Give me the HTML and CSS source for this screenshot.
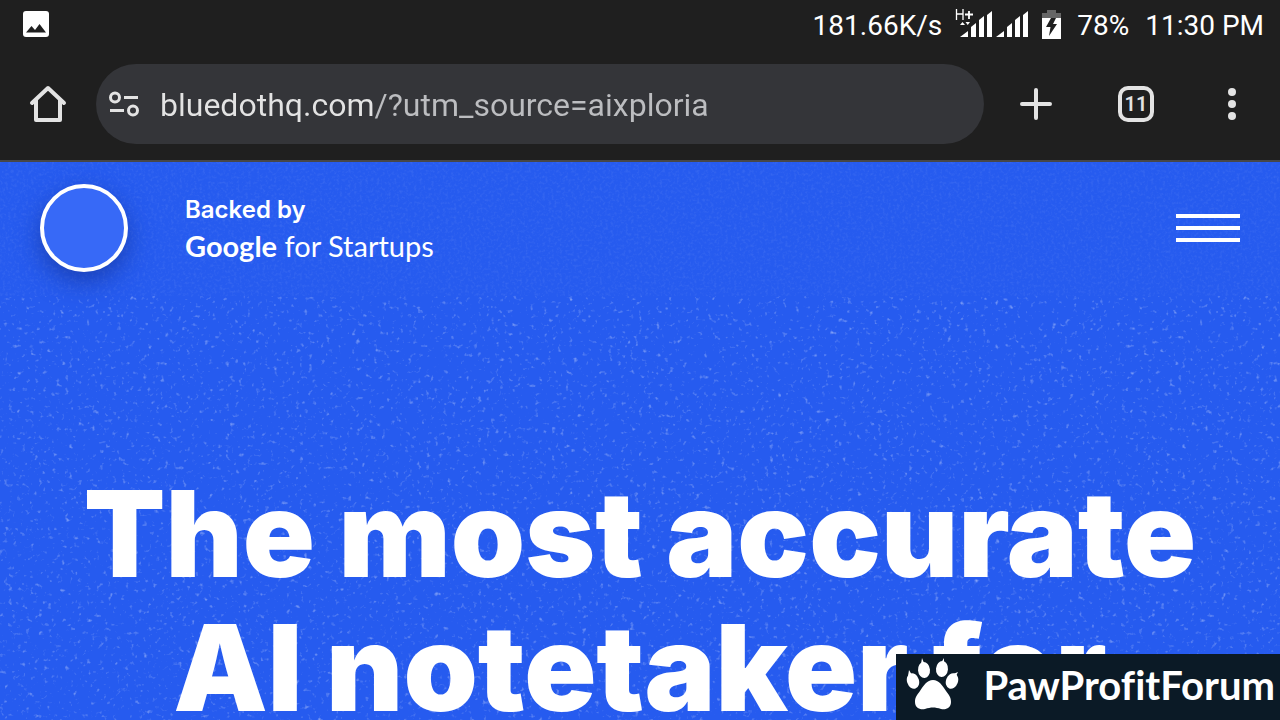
FILE: index.html
```html
<!DOCTYPE html>
<html lang="en">
<head>
  <meta charset="UTF-8">
  <meta name="viewport" content="width=device-width, initial-scale=1.0">
  <title>Bluedot</title>
  <link rel="stylesheet" href="styles.css">
</head>
<body>
  <header class="browser">
    <div class="status-bar">
      <svg class="picture-icon" width="26" height="26" viewBox="0 0 26 26">
        <rect width="26" height="26" rx="3" fill="#fff"/>
        <path d="M3 21.500 8.500 15l3.500 4 4.500-6L23 21.500z" fill="#1f1f1f"/>
      </svg>
      <div class="status-info">
        <span>181.66K/s</span>
        <svg class="signal" width="74" height="30" viewBox="0 0 74 30" fill="#fff">
          <g fill="none" stroke="#fff" stroke-width="1.300">
            <path d="M1.500 0v11M8 0v11M1.500 5h6.500"/>
            <path d="M10 5.500h8M14 2v8" stroke-width="1.800"/>
          </g>
          <path d="m5 16 2.500-3 2.500 3zM10.500 13h4.500l-2.250 3z"/>
          <path d="M5 28l8-6v6zM16 18l5-4v14h-5zM24 11l5-4v21h-5zM32 6l5-4v26h-5z"/>
          <path d="M41 28l8-6v6zM52 18l5-4v14h-5zM60 11l5-4v21h-5zM68 6l5-4v26h-5z"/>
        </svg>
        <svg class="battery" width="19" height="29" viewBox="0 0 19 29">
          <path d="M5 0h9v3h5v6H0V3h5z" fill="#666"/>
          <path d="M0 8h19v21H0z" fill="#fff"/>
          <path d="M9 8h5l-3 6h4L7 26l1.500-9H4z" fill="#1f1f1f"/>
        </svg>
        <span>78%</span>
        <span>11:30 PM</span>
      </div>
    </div>
    <div class="toolbar">
      <button class="tool" type="button" aria-label="Home">
        <svg width="40" height="40" viewBox="0 0 40 40" fill="none" stroke="#e3e3e3" stroke-width="4" stroke-linecap="round" stroke-linejoin="round">
          <path d="M4 19 20 4l16 15"/>
          <path d="M8 16v20h24V16" stroke-linecap="butt"/>
        </svg>
      </button>
      <div class="address">
        <button class="site-info" type="button" aria-label="Site information">
          <svg width="32" height="28" viewBox="0 0 32 28" fill="none" stroke="#e3e3e3" stroke-width="3">
            <circle cx="7" cy="7.500" r="4.500"/>
            <path d="M16 7.500h14M2 20.500h14"/>
            <circle cx="25" cy="20.500" r="4.500"/>
          </svg>
        </button>
        <input class="url" type="text" value="bluedothq.com/?utm_source=aixploria" aria-label="Address" spellcheck="false">
      </div>
      <div class="actions">
        <button class="tool" type="button" aria-label="New tab">
          <svg width="32" height="32" viewBox="0 0 32 32" stroke="#e3e3e3" stroke-width="4" stroke-linecap="round">
            <path d="M16 2v28M2 16h28"/>
          </svg>
        </button>
        <button class="tool tabs" type="button" aria-label="Open tabs">11</button>
        <button class="tool" type="button" aria-label="Menu">
          <svg width="8" height="32" viewBox="0 0 8 32" fill="#e3e3e3">
            <circle cx="4" cy="4" r="4"/>
            <circle cx="4" cy="16" r="4"/>
            <circle cx="4" cy="28" r="4"/>
          </svg>
        </button>
      </div>
    </div>
  </header>

  <main class="page">
    <svg class="grain" width="100%" height="100%" aria-hidden="true">
      <filter id="fine" x="0" y="0" width="100%" height="100%">
        <feTurbulence type="fractalNoise" baseFrequency="0.35" numOctaves="2" seed="4"/>
        <feColorMatrix values="0 0 0 0 1  0 0 0 0 1  0 0 0 0 1  0.9 0 0 0 -0.42"/>
      </filter>
      <filter id="coarse" x="0" y="0" width="100%" height="100%">
        <feTurbulence type="fractalNoise" baseFrequency="0.23" numOctaves="2" seed="9"/>
        <feColorMatrix values="0 0 0 0 1  0 0 0 0 1  0 0 0 0 1  1.2 1.2 0 0 -1.4"/>
        <feGaussianBlur stdDeviation="0.7"/>
      </filter>
      <rect width="100%" height="134" filter="url(#fine)" opacity="0.2"/>
      <rect y="134" width="100%" height="100%" filter="url(#coarse)" opacity="0.6"/>
    </svg>
    <nav class="site-nav">
      <a class="logo" href="#" aria-label="Bluedot"></a>
      <div class="backed">
        <span class="backed-by">Backed by</span>
        <span class="startups"><b>Google</b> for Startups</span>
      </div>
      <button class="burger" type="button" aria-label="Open menu">
        <span></span>
        <span></span>
        <span></span>
      </button>
    </nav>
    <h1 class="headline">The most accurate<br>AI notetaker for</h1>
  </main>

  <aside class="watermark">
    <svg width="54" height="54" viewBox="0 0 54 54" fill="#fff">
      <path d="M27 22c6 0 9 5 13 11 3 4 5 6 5 11 0 6-5 8-10 7-6-2-10-2-16 0-5 1-10-1-10-7 0-5 2-7 5-11 4-6 7-11 13-11z"/>
      <ellipse cx="18" cy="12" rx="6" ry="8" transform="rotate(-5 18 12)"/>
      <ellipse cx="36" cy="11" rx="6" ry="8" transform="rotate(5 36 11)"/>
      <ellipse cx="7" cy="23" rx="6" ry="8" transform="rotate(-18 7 23)"/>
      <ellipse cx="46" cy="23" rx="6" ry="8" transform="rotate(20 46 23)"/>
      <path d="M15 6l1-6 2 5zM35 5l3-5v6zM2 18l1-6 3 5zM47 16l5-2-2 4z"/>
    </svg>
    <span>PawProfitForum</span>
  </aside>
</body>
</html>
```
FILE: styles.css
```css
* {
  box-sizing: border-box;
}

body {
  display: flex;
  flex-direction: column;
  height: 100vh;
  margin: 0;
  overflow: hidden;
  background-color: #265bef;
  color: #fff;
  font-family: Inter, sans-serif;
}

button {
  padding: 0;
  border: none;
  background: none;
  color: inherit;
}

svg {
  display: block;
}

/* phone and browser bars */
.browser {
  flex: none;
  background-color: #1f1f1f;
  border-bottom: 2px solid #474747;
  font-family: Roboto, sans-serif;
}

.status-bar {
  display: flex;
  align-items: center;
  justify-content: space-between;
  height: 48px;
  padding: 0 16px 0 23px;
}

.status-info {
  display: flex;
  align-items: center;
  gap: 16px;
  font-size: 28px;
  line-height: 48px;
}

.status-info span {
  padding-top: 3px;
}

.signal {
  margin: 0 -3px 0 -3px;
}

.toolbar {
  display: flex;
  align-items: center;
  height: 112px;
  padding: 0 28px;
}

.tool {
  display: grid;
  place-items: center;
}

.address {
  flex: 1;
  display: flex;
  align-items: center;
  gap: 20px;
  height: 80px;
  margin: 0 36px 0 28px;
  padding: 0 32px 0 12px;
  border-radius: 40px;
  background-color: #343539;
}

.url {
  flex: 1;
  min-width: 0;
  padding: 2px 0 0;
  border: none;
  outline: none;
  /* host is brighter than the rest of the address */
  background: linear-gradient(90deg, #e3e3e3 213px, #bcbdc0 213px);
  background-clip: text;
  -webkit-background-clip: text;
  color: transparent;
  font-family: Roboto, sans-serif;
  font-size: 32px;
  line-height: 40px;
}

.actions {
  display: flex;
  align-items: center;
  gap: 66px;
}

.actions .tool:last-child {
  width: 8px;
  margin: 0 16px 0 8px;
}

.tabs {
  width: 36px;
  height: 36px;
  border: 4px solid #e3e3e3;
  border-radius: 10px;
  color: #e3e3e3;
  font-family: Roboto, sans-serif;
  font-size: 20px;
  font-weight: 600;
  line-height: 28px;
}

/* landing page */
.page {
  position: relative;
  flex: 1;
  min-height: 0;
  overflow: hidden;
}

.grain {
  position: absolute;
  inset: 0;
  z-index: -1;
}

.site-nav {
  display: flex;
  align-items: center;
  height: 132px;
  padding: 0 40px;
}

.logo {
  width: 88px;
  height: 88px;
  border: 4px solid #fff;
  border-radius: 50%;
  background-color: #3769f7;
  box-shadow: 0 10px 24px rgba(15, 40, 130, 0.5);
}

.backed {
  display: flex;
  flex-direction: column;
  margin-left: 57px;
  font-family: Lato, sans-serif;
}

.backed-by {
  font-family: Inter, sans-serif;
  font-size: 24px;
  font-weight: 600;
  line-height: 36px;
}

.startups {
  font-size: 29px;
  line-height: 36px;
}

.burger {
  display: flex;
  flex-direction: column;
  gap: 8px;
  width: 64px;
  margin-left: auto;
}

.burger span {
  height: 4px;
  background-color: #fff;
}

.headline {
  margin: 173px 0 0;
  font-size: 119px;
  font-weight: 900;
  line-height: 134px;
  text-align: center;
  white-space: nowrap;
}

.watermark {
  position: fixed;
  right: 0;
  bottom: 0;
  display: flex;
  align-items: center;
  justify-content: space-between;
  width: 30%;
  height: 66px;
  padding: 0 5px 4px 10px;
  background-color: #0b1a26;
  font-family: Lato, sans-serif;
  font-size: 40px;
  font-weight: 700;
  font-variant-ligatures: none;
}
```
